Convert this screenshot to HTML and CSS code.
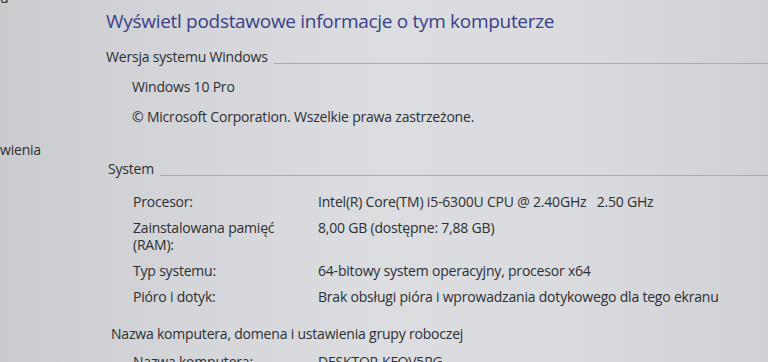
FILE: index.html
```html
<!DOCTYPE html>
<html lang="pl">
<head>
<meta charset="utf-8">
<title>System</title>
<link rel="stylesheet" href="styles.css">
</head>
<body>
<div class="page">
  <aside class="side">
    <div class="side-top">u</div>
    <div class="side-link">wienia</div>
  </aside>
  <main class="main">
    <h1 class="title">Wyświetl podstawowe informacje o tym komputerze</h1>
    <div class="section-head">
      <span class="section-name">Wersja systemu Windows</span>
      <span class="rule rule-1"></span>
    </div>
    <div class="edition">
      <p class="ed-line">Windows 10 Pro</p>
      <p class="ed-line">© Microsoft Corporation. Wszelkie prawa zastrzeżone.</p>
    </div>
    <div class="section-head section-system">
      <span class="section-name">System</span>
      <span class="rule rule-2"></span>
    </div>
    <div class="props">
      <div class="lbl">Procesor:</div>
      <div class="val">Intel(R) Core(TM) i5-6300U CPU @ 2.40GHz&nbsp;&nbsp; 2.50 GHz</div>
      <div class="lbl">Zainstalowana pamięć (RAM):</div>
      <div class="val">8,00 GB (dostępne: 7,88 GB)</div>
      <div class="lbl">Typ systemu:</div>
      <div class="val">64-bitowy system operacyjny, procesor x64</div>
      <div class="lbl">Pióro i dotyk:</div>
      <div class="val">Brak obsługi pióra i wprowadzania dotykowego dla tego ekranu</div>
    </div>
    <div class="section-head section-name-pc">
      <span class="section-name">Nazwa komputera, domena i ustawienia grupy roboczej</span>
    </div>
    <div class="props props-pc">
      <div class="lbl">Nazwa komputera:</div>
      <div class="val">DESKTOP-KFOV5RG</div>
    </div>
  </main>
</div>
</body>
</html>
```

FILE: styles.css
```css
html, body {
  margin: 0;
  padding: 0;
}
body {
  width: 768px;
  height: 362px;
  overflow: hidden;
  font-family: "Open Sans", "Noto Sans", sans-serif;
  color: #2e2f33;
  letter-spacing: -0.2px;
  background:
    linear-gradient(90deg, #c9cbce 0%, #d2d4d7 20%, #dbdde0 50%, #d9dbde 75%, #cfd1d4 100%);
}
.page {
  display: flex;
  height: 362px;
}
.side {
  width: 106px;
  flex: none;
  font-size: 14px;
  overflow: hidden;
}
.side-top {
  margin-top: -12px;
  line-height: 20px;
}
.side-link {
  margin-top: 132px;
  line-height: 20px;
}
.main {
  flex: 1;
  min-width: 0;
}
.title {
  margin: 6px 0 0 0;
  font-size: 19px;
  letter-spacing: -0.3px;
  font-weight: 400;
  line-height: 30px;
  color: #3b4088;
  white-space: nowrap;
}
.section-head {
  display: flex;
  align-items: center;
  font-size: 14px;
  line-height: 20px;
  margin-top: 11px;
}
.section-name {
  white-space: nowrap;
}
.rule {
  flex: 1;
  height: 0;
  border-top: 1px solid #a9acb0;
  margin-left: 6px;
}
.rule-1 { transform: translateY(6px); }
.rule-2 { transform: translateY(6px); }
.edition {
  padding-left: 26px;
  font-size: 14px;
}
.ed-line {
  margin: 0;
  line-height: 30px;
}
.ed-line:first-child { margin-top: 5px; }
.section-system {
  margin-top: 27px;
  padding-left: 2px;
}
.props {
  display: grid;
  grid-template-columns: 185px auto;
  row-gap: 9px;
  padding-left: 27px;
  margin-top: 14px;
  font-size: 14px;
  line-height: 17px;
}
.lbl {
  padding-right: 8px;
}
.val {
  white-space: nowrap;
}
.section-name-pc {
  margin-top: 19px;
  padding-left: 5px;
}
.props-pc {
  margin-top: 9px;
}
```
